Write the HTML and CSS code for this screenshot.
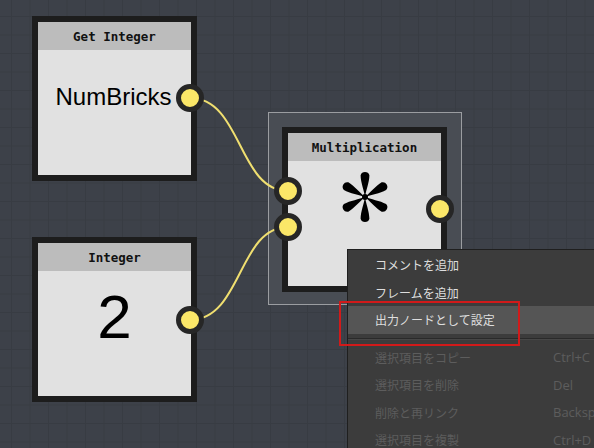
FILE: index.html
```html
<!DOCTYPE html>
<html lang="ja">
<head>
  <meta charset="UTF-8" />
  <title>Node Graph</title>
  <link rel="stylesheet" href="styles.css">
</head>
<body>
  <div id="canvas">
    <div class="frame"></div>

    <svg class="wires" width="594" height="448" viewBox="0 0 594 448">
      <path d="M190 98 C 242 98, 238 191, 288 191" />
      <path d="M190 320 C 242 320, 238 227, 288 227" />
    </svg>

    <div class="node node-get">
      <div class="node-head">Get Integer</div>
      <div class="node-body body-name">NumBricks</div>
      <span class="port port-out" style="top:62px"></span>
    </div>

    <div class="node node-int">
      <div class="node-head">Integer</div>
      <div class="node-body body-value">2</div>
      <span class="port port-out" style="top:63px"></span>
    </div>

    <div class="node node-mul">
      <div class="node-head">Multiplication</div>
      <div class="node-body body-op">
        <svg class="star" width="54" height="56" viewBox="-27 -28 54 56">
          <g id="petal">
            <path d="M0 0 C -0.8 -6, -4.4 -15, -4.4 -21.8 A 4.6 4.6 0 0 1 4.4 -21.8 C 4.4 -15, 0.8 -6, 0 0 Z" />
          </g>
          <use href="#petal" transform="rotate(60)" />
          <use href="#petal" transform="rotate(120)" />
          <use href="#petal" transform="rotate(180)" />
          <use href="#petal" transform="rotate(240)" />
          <use href="#petal" transform="rotate(300)" />
          <circle r="3" />
        </svg>
      </div>
      <span class="port port-in" style="top:44px"></span>
      <span class="port port-in" style="top:80px"></span>
      <span class="port port-out" style="top:62px"></span>
    </div>

    <div class="menu">
      <div class="menu-item"><span>コメントを追加</span><span></span></div>
      <div class="menu-item"><span>フレームを追加</span><span></span></div>
      <div class="menu-item active"><span>出力ノードとして設定</span><span></span></div>
      <div class="menu-sep"></div>
      <div class="menu-item disabled"><span>選択項目をコピー</span><span class="key">Ctrl+C</span></div>
      <div class="menu-item disabled"><span>選択項目を削除</span><span class="key">Del</span></div>
      <div class="menu-item disabled"><span>削除と再リンク</span><span class="key">Backspace</span></div>
      <div class="menu-item disabled"><span>選択項目を複製</span><span class="key">Ctrl+D</span></div>
    </div>

    <div class="mark"></div>
  </div>
</body>
</html>
```

FILE: styles.css
```css
* { box-sizing: border-box; }
body {
  margin: 0;
  overflow: hidden;
  font-family: "Liberation Sans", Arial, sans-serif;
}
#canvas {
  position: relative;
  width: 594px;
  height: 448px;
  overflow: hidden;
  background-color: #3d4149;
  background-image:
    linear-gradient(to right, #383c43 1px, transparent 1px),
    linear-gradient(to bottom, #383c43 1px, transparent 1px);
  background-size: 18.5px 18.5px;
  background-position: 11px 16px;
}
.frame {
  position: absolute;
  left: 268px;
  top: 112px;
  width: 194px;
  height: 193px;
  background: #494d54;
  border: 1px solid #9b9da1;
}
.wires {
  position: absolute;
  left: 0;
  top: 0;
}
.wires path {
  fill: none;
  stroke: #f0df70;
  stroke-width: 2;
}
.node {
  position: absolute;
  box-sizing: content-box;
  width: 153px;
  height: 153px;
  border: 6px solid #1d1d1d;
  background: #e1e1e1;
  display: flex;
  flex-direction: column;
}
.node-get { left: 32px; top: 16px; }
.node-int { left: 32px; top: 237px; }
.node-mul { left: 282px; top: 127px; }
.node-head {
  height: 28px;
  background: #bcbcbc;
  display: flex;
  align-items: center;
  justify-content: center;
  font-family: "DejaVu Sans Mono", monospace;
  font-weight: bold;
  font-size: 12.5px;
  color: #111;
}
.node-body {
  flex: 1;
  display: flex;
  justify-content: center;
  color: #000;
}
.body-name {
  padding-top: 32px;
  padding-right: 2px;
  font-size: 24px;
  line-height: 30px;
}
.body-value {
  padding-top: 13px;
  font-size: 62px;
  line-height: 66px;
}
.body-op {
  padding-top: 8px;
}
.star { fill: #000; }
.port {
  position: absolute;
  width: 28px;
  height: 28px;
  border-radius: 50%;
  background: #fbe768;
  border: 5px solid #262626;
}
.port-out { right: -13px; }
.port-in { left: -14px; }
.menu {
  position: absolute;
  left: 347px;
  top: 249px;
  width: 270px;
  height: 220px;
  background: #3c3c3c;
  border: 1px solid #1f1f1f;
  padding-top: 1px;
  font-family: "Noto Sans CJK JP", sans-serif;
  font-size: 12px;
  color: #dedede;
}
.menu-item {
  display: grid;
  grid-template-columns: 178px auto;
  align-items: center;
  height: 27.5px;
  padding-left: 27px;
  white-space: nowrap;
}
.menu-item.active { background: #555555; }
.menu-item.disabled { color: #5d5d5d; }
.key {
  font-family: "Open Sans", "Noto Sans", sans-serif;
  font-size: 13px;
}
.menu-sep {
  height: 1px;
  margin: 4px 0 4px 0;
  background: #2a2a2a;
  border-bottom: 1px solid #474747;
  box-sizing: content-box;
}
.mark {
  position: absolute;
  left: 339px;
  top: 301px;
  width: 181px;
  height: 45px;
  border: 2px solid #d11a1a;
}
```
